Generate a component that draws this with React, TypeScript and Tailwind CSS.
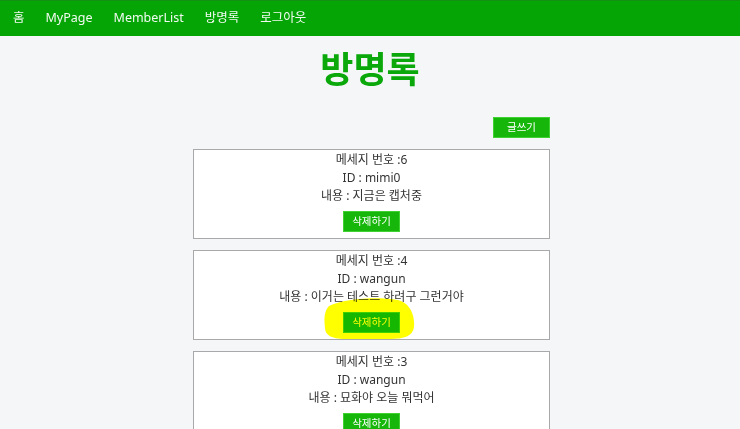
import React from "react";

interface Message {
  no: number;
  id: string;
  content: string;
}

const messages: Message[] = [
  { no: 6, id: "mimi0", content: "지금은 캡처중" },
  { no: 4, id: "wangun", content: "이거는 테스트 하려구 그런거야" },
  { no: 3, id: "wangun", content: "묘화야 오늘 뭐먹어" },
];

const navItems = ["홈", "MyPage", "MemberList", "방명록", "로그아웃"];

const font = { fontFamily: '"Noto Sans", "Noto Sans CJK KR", sans-serif' };

function GreenButton({ label }: { label: string }) {
  return (
    <button className="w-[57px] h-[21px] bg-[#16b70a] border border-[#3fd232] text-white text-[10.5px] leading-none">
      {label}
    </button>
  );
}

export default function App() {
  return (
    <div className="relative w-[740px] h-[429px] overflow-hidden bg-[#f4f6f8]" style={font}>
      {/* Top nav */}
      <nav className="h-[36px] bg-[#05a505] border-t border-[#129112] flex items-center gap-[21px] pl-[13px]">
        {navItems.map((item) => (
          <a key={item} className="text-[12.5px] text-white/95 leading-none">
            {item}
          </a>
        ))}
      </nav>

      <h1 className="mt-[16px] text-center text-[36px] leading-none font-bold text-[#0aa80a]">방명록</h1>

      <div className="w-[357px] ml-[193px] mt-[29px] flex flex-col">
        <div className="flex justify-end">
          <GreenButton label="글쓰기" />
        </div>

        <div className="mt-[11px] flex flex-col gap-[11px]">
          {messages.map((m) => (
            <div
              key={m.no}
              className="bg-white border border-[#a9a9a9] pt-[1px] pb-[6px] flex flex-col items-center text-[12px] leading-[18px] text-[#333]"
            >
              <div>메세지 번호 :{m.no}</div>
              <div>ID : {m.id}</div>
              <div>내용 : {m.content}</div>
              <div className="mt-[6px] flex">
                <GreenButton label="삭제하기" />
              </div>
            </div>
          ))}
        </div>
      </div>

      {/* Highlighter mark drawn on the screenshot */}
      <svg
        className="absolute left-0 top-0 pointer-events-none mix-blend-multiply"
        width="740"
        height="429"
        viewBox="0 0 740 429"
      >
        <path
          d="M329,306 C344,298 386,296 401,301 C411,305 415,317 414,327 C413,336 404,339 390,339 L344,339 C332,339 325,335 325,328 C324,320 324,311 329,306 Z"
          fill="#ffff00"
        />
      </svg>
    </div>
  );
}
